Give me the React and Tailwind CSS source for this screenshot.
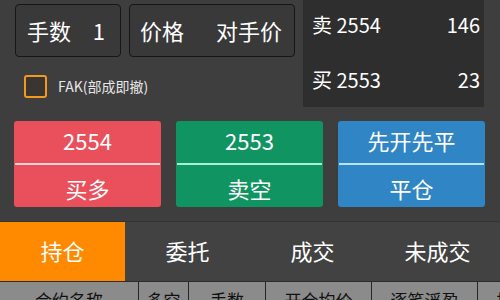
const FONT = { fontFamily: '"Noto Sans CJK SC", "Noto Sans", sans-serif' };

const TABS = ["持仓", "委托", "成交", "未成交"];
const COLS = [
    { label: "合约名称", w: "w-[138px]" },
    { label: "多空", w: "w-[50px]" },
    { label: "手数", w: "w-[77px]" },
    { label: "开仓均价", w: "w-[106px]" },
    { label: "逐笔浮盈", w: "w-[106px]" },
    { label: "持仓盈亏", w: "w-[106px]" },
];

function TradeButton({ price, label, bg, line }) {
    return (
        <div className={`w-[147px] h-[86px] rounded-[3px] flex flex-col text-white ${bg}`}>
            <div className="h-[42px] flex items-center justify-center text-[22px] leading-none pb-[4px]">{price}</div>
            <div className={`h-[2px] mx-[1px] ${line}`} />
            <div className="flex-1 flex items-center justify-center text-[22px] leading-none pt-[3px]">{label}</div>
        </div>
    );
}

export default function App() {
    return (
        <div style={FONT} className="w-[500px] h-[300px] overflow-hidden bg-[#3e3e3e] text-white">

            {/* Top: order inputs + quote */}
            <div className="flex h-[121px]">
                <div className="w-[303px] flex flex-col">
                    <div className="flex gap-[8px] pl-[15px] pt-[4px]">
                        <div className="w-[106px] h-[53px] rounded-[4px] border-[1.5px] border-[#161616] bg-[#393939] flex items-center justify-between pl-[11px] pr-[15px] text-[22px]">
                            <span>手数</span>
                            <span>1</span>
                        </div>
                        <div className="w-[166px] h-[53px] rounded-[4px] border-[1.5px] border-[#161616] bg-[#393939] flex items-center justify-between pl-[10px] pr-[12px] text-[22px]">
                            <span>价格</span>
                            <span>对手价</span>
                        </div>
                    </div>
                    <div className="flex items-center gap-[11px] pl-[24px] mt-[18px]">
                        <div className="w-[23px] h-[23px] rounded-[3px] border-[2px] border-[#f29a1f] bg-[#3a3530]" />
                        <span className="text-[14px] text-[#e6e6e6]">FAK(部成即撤)</span>
                    </div>
                </div>

                <div className="w-[181px] h-[107px] bg-[#2e2e2e] flex flex-col pl-[9px] pr-[4px] text-[20px]">
                    <div className="flex items-center justify-between h-[50px]">
                        <span>卖 2554</span>
                        <span>146</span>
                    </div>
                    <div className="flex items-center justify-between h-[57px] pt-[3px]">
                        <span>买 2553</span>
                        <span>23</span>
                    </div>
                </div>
            </div>

            {/* Trade buttons */}
            <div className="flex gap-[15px] pl-[14px]">
                <TradeButton price="2554" label="买多" bg="bg-[#e9505b]" line="bg-[#f7d3d3]" />
                <TradeButton price="2553" label="卖空" bg="bg-[#109461]" line="bg-[#a6f0d2]" />
                <TradeButton price="先开先平" label="平仓" bg="bg-[#3085c5]" line="bg-[#b7e4f6]" />
            </div>

            {/* Tabs */}
            <div className="mt-[14px] border-t border-[#333333] flex h-[60px] bg-[#424242]">
                {TABS.map((t, i) => (
                    <div
                        key={t}
                        className={`w-[125px] flex items-center justify-center text-[22px] pb-[2px] ${i === 0 ? "bg-[#ff8a00]" : ""}`}
                    >
                        {t}
                    </div>
                ))}
            </div>

            {/* Table header */}
            <div className="flex h-[40px] bg-[#8b8b8b] border-t border-[#2c2c2c] text-[#111111] text-[17px] leading-[20px]">
                {COLS.map((c, i) => (
                    <div
                        key={c.label}
                        className={`${c.w} shrink-0 flex justify-center pt-[8px] ${i > 0 ? "border-l-[1.5px] border-[#262626]" : ""}`}
                    >
                        {c.label}
                    </div>
                ))}
            </div>

        </div>
    );
}
